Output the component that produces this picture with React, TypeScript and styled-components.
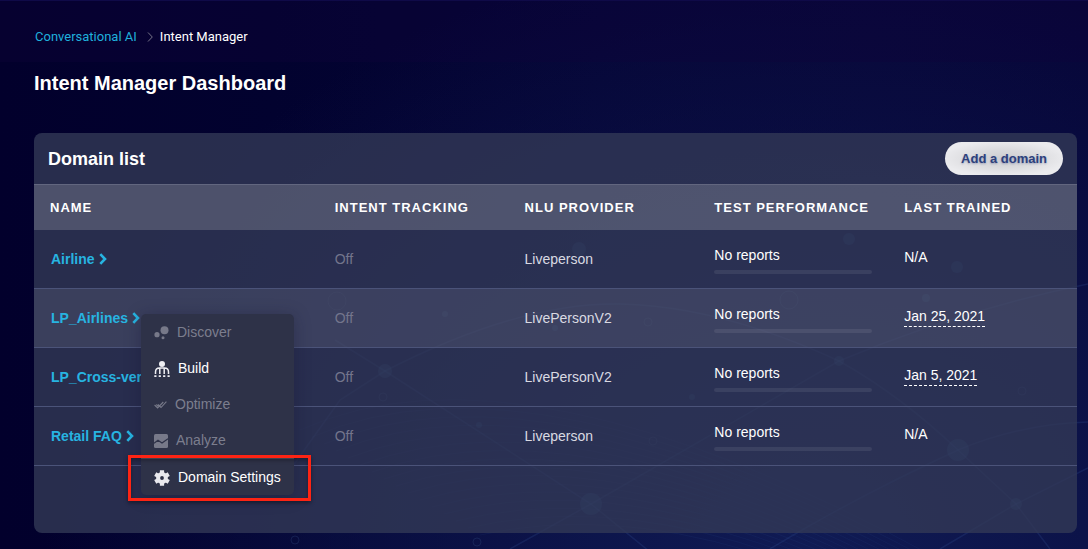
import React from "react";
import styled, { createGlobalStyle } from "styled-components";

const GlobalStyle = createGlobalStyle`
  * { box-sizing: border-box; }
  body {
    margin: 0;
    background: #02002c;
    color: #fff;
    font-family: "Liberation Sans", Arial, sans-serif;
    font-size: 14px;
    line-height: 20px;
  }
`;

const Page = styled.div`
  position: relative;
  isolation: isolate;
  min-height: 100vh;
  padding-bottom: 16px;
  background:
    radial-gradient(ellipse 70% 110% at 74% 100%, #101b54 0%, rgba(13, 22, 76, 0.65) 50%, rgba(2, 0, 44, 0) 100%),
    linear-gradient(90deg, #02002c 0%, #02022f 25%, #050536 55%, #070638 80%, #060538 100%);
`;

const Backdrop = styled.svg`
  position: absolute;
  inset: 0;
  width: 100%;
  height: 100%;
  z-index: -1;
`;

const TopBar = styled.nav`
  display: flex;
  align-items: center;
  height: 62px;
  padding: 10px 35px 0;
  border-top: 1px solid #0f0a48;
  background: rgba(16, 4, 60, 0.3);
  font-family: Roboto, sans-serif;
  font-size: 13px;
`;

const CrumbLink = styled.a`
  color: #1fb0dc;
  text-decoration: none;
`;

const CrumbArrow = styled.svg`
  width: 6px;
  height: 10px;
  margin: 0 7px 0 10px;
`;

const Main = styled.main`
  padding: 11px 11px 0 34px;
`;

const Title = styled.h1`
  margin: 0 0 40px;
  font-size: 20px;
  line-height: 20px;
  font-weight: 700;
`;

const Card = styled.section`
  padding-bottom: 67px;
  border-radius: 8px;
  background: rgba(51, 57, 86, 0.79);
`;

const CardHeader = styled.header`
  display: flex;
  align-items: center;
  justify-content: space-between;
  height: 51px;
  padding: 0 14px;
`;

const CardTitle = styled.h2`
  margin: 0;
  font-size: 18px;
  line-height: 20px;
`;

const AddButton = styled.button`
  height: 33px;
  padding: 0 16px;
  border: 0;
  border-radius: 17px;
  background: radial-gradient(ellipse at center, #cdcdd1 0%, #d9d9dc 35%, #ebebee 75%);
  color: #2d3f7c;
  font: 700 13px/20px "Liberation Sans", Arial, sans-serif;
  text-shadow: 0 1px 2px rgba(45, 63, 124, 0.35);
`;

const Table = styled.table`
  width: 100%;
  table-layout: fixed;
  border-collapse: separate;
  border-spacing: 0;
`;

const HeadCell = styled.th<{ $width: string }>`
  width: ${(p) => p.$width};
  height: 46px;
  padding: 0 0 0 16px;
  border-top: 1px solid #62667f;
  background: rgba(250, 252, 245, 0.18);
  font-size: 13px;
  letter-spacing: 1px;
  text-align: left;
  white-space: nowrap;
`;

const Row = styled.tr<{ $active?: boolean }>`
  background: ${(p) => (p.$active ? "rgba(255, 255, 255, 0.085)" : "transparent")};
`;

const Cell = styled.td<{ $tone?: "muted" | "soft" }>`
  position: relative;
  height: 59px;
  padding: 0 16px;
  border-bottom: 1px solid #4b5379;
  vertical-align: middle;
  white-space: nowrap;
  color: ${(p) => (p.$tone === "muted" ? "#73758c" : p.$tone === "soft" ? "#d9dae2" : "#fff")};

  &:first-child { padding-left: 17px; }
`;

const DomainLink = styled.a`
  display: inline-flex;
  align-items: center;
  gap: 4px;
  color: #27b4e1;
  font-weight: 700;
  text-decoration: none;
`;

const LinkArrow = styled.svg`
  width: 8px;
  height: 12px;
`;

const Reports = styled.div`
  display: grid;
  gap: 5px;
`;

const Track = styled.div`
  height: 4px;
  border-radius: 2px;
  background: rgba(255, 255, 255, 0.08);
`;

const Trained = styled.span<{ $dated: boolean }>`
  display: block;
  width: fit-content;
  margin-bottom: 4px;
  border-bottom: 1px dashed ${(p) => (p.$dated ? "#fff" : "transparent")};
`;

const Menu = styled.div`
  position: absolute;
  z-index: 2;
  top: 25px;
  left: 107px;
  width: 153px;
  border-radius: 5px;
  background: #2e3248;
  box-shadow: 0 2px 16px rgba(20, 20, 50, 0.35);
`;

const MenuItem = styled.button`
  display: flex;
  align-items: center;
  gap: 8px;
  width: 100%;
  height: 36px;
  padding: 0 13px;
  border: 0;
  background: none;
  color: #fff;
  font: 14px/20px "Liberation Sans", Arial, sans-serif;
  white-space: nowrap;

  &:disabled { color: #7c7e8e; }
`;

const MenuFooter = styled.div`
  position: relative;
  border-top: 1px solid #555866;
`;

const Callout = styled.div`
  position: absolute;
  inset: -4px -17px -6px -13px;
  border: 3px solid #fd2414;
  box-shadow: 0 2px 4px rgba(0, 0, 0, 0.4), inset 0 2px 4px rgba(0, 0, 0, 0.35);
  pointer-events: none;
`;

const DiscoverIcon = () => (
  <svg width="15" height="16" viewBox="0 0 15 16" fill="#777989" aria-hidden="true">
    <circle cx="10.5" cy="6.300" r="4" />
    <circle cx="3" cy="10.700" r="2.6" />
    <circle cx="9" cy="13.800" r="1.5" />
  </svg>
);

const BuildIcon = () => (
  <svg width="16" height="18" viewBox="0 0 16 18" fill="none" stroke="#eeeef3" strokeWidth="1.5" aria-hidden="true">
    <circle cx="8" cy="5" r="3" fill="#eeeef3" stroke="none" />
    <path d="M1.5 15v-2c0-2.500 1.500-4 4-4h5c2.500 0 4 1.500 4 4v2M5.800 9v6M10.200 9v6" />
    <path d="M.3 17.100h2.200M4.700 17.100h2.200M9.100 17.100h2.200M13.500 17.100h2.200" strokeWidth="1.600" />
  </svg>
);

const OptimizeIcon = () => (
  <svg width="13" height="10" viewBox="0 0 13 10" fill="none" stroke="#777989" strokeWidth="1.1" aria-hidden="true">
    <path d="M.6 6 3.600 9 9.300 3M4 5.500 7 8.500 12.400 2.600" />
    <path d="M2.400 5.500 4 7.100 5 6.100" />
  </svg>
);

const AnalyzeIcon = () => (
  <svg width="14" height="16" viewBox="0 0 14 16" aria-hidden="true">
    <rect y="2" width="14" height="14" rx="1.500" fill="#777989" />
    <path d="M0 11.300 4 8.300 8 11 14 6.800" fill="none" stroke="#2e3248" strokeWidth="1.200" />
  </svg>
);

const GearIcon = () => (
  <svg width="16" height="18" viewBox="0 0 16 18" fill="none" stroke="#e9e9ee" aria-hidden="true">
    <circle cx="8" cy="10" r="3.900" strokeWidth="4" />
    {[0, 60, 120].map((angle) => (
      <path
        key={angle}
        d="M8 2.200V5.500M8 14.500v3.300"
        strokeWidth="4.200"
        transform={`rotate(${angle} 8 10)`}
      />
    ))}
  </svg>
);

const Network = () => (
  <Backdrop viewBox="0 0 1088 549" preserveAspectRatio="xMidYMid slice" aria-hidden="true">
    <g fill="none" stroke="#35579c" strokeOpacity=".22" strokeWidth="1.500">
      <path d="M335 340 385 371 591 504 660 560" />
      <path d="M385 371Q520 302 620 304T839 361" />
      <path d="M385 371 340 400 290 470" />
      <path d="M510 549 591 504 839 361Q960 310 1088 284" />
      <path d="M839 361Q900 395 958 450L1016 504 1050 549" />
      <path d="M770 549Q850 500 958 450 1020 424 1088 422" />
      <path d="M940 549 1016 504 1088 468" />
    </g>
    <g fill="none" stroke="#35579c" strokeOpacity=".1">
      {Array.from({ length: 16 }, (_, i) => (
        <path key={i} d={`M${300 + i * 12} ${430 + i * 7}Q${520 + i * 14} ${330 + i * 10} ${940 + i * 8} ${560 + i * 10}`} />
      ))}
    </g>
    <g fill="#31659a" fillOpacity=".28">
      <circle cx="849" cy="239" r="6" />
      <circle cx="957" cy="267" r="6" />
      <circle cx="579" cy="249" r="7" />
      <circle cx="385" cy="371" r="7" />
      <circle cx="591" cy="504" r="11" />
      <circle cx="839" cy="361" r="5" />
      <circle cx="958" cy="450" r="11" />
      <circle cx="1016" cy="504" r="6" />
      <circle cx="926" cy="298" r="4" />
      <circle cx="445" cy="314" r="3" />
      <circle cx="555" cy="328" r="3" />
      <circle cx="479" cy="425" r="3" />
      <circle cx="692" cy="397" r="3" />
    </g>
    <g fill="none" stroke="#46629c" strokeOpacity=".22">
      <circle cx="337" cy="301" r="9" />
      <circle cx="789" cy="300" r="9" />
      <circle cx="648" cy="322" r="4" />
      <circle cx="383" cy="397" r="4" />
      <circle cx="653" cy="441" r="4" />
      <circle cx="1022" cy="391" r="4" />
      <circle cx="477" cy="542" r="4" />
      <circle cx="295" cy="540" r="4" />
    </g>
  </Backdrop>
);

const DomainMenu = () => (
  <Menu role="menu" aria-label="LP_Airlines">
    <MenuItem role="menuitem" disabled><DiscoverIcon />Discover</MenuItem>
    <MenuItem role="menuitem"><BuildIcon />Build</MenuItem>
    <MenuItem role="menuitem" disabled><OptimizeIcon />Optimize</MenuItem>
    <MenuItem role="menuitem" disabled><AnalyzeIcon />Analyze</MenuItem>
    <MenuFooter>
      <MenuItem role="menuitem"><GearIcon />Domain Settings</MenuItem>
      <Callout />
    </MenuFooter>
  </Menu>
);

const columns = [
  { label: "NAME", width: "27.3%" },
  { label: "INTENT TRACKING", width: "18.2%" },
  { label: "NLU PROVIDER", width: "18.2%" },
  { label: "TEST PERFORMANCE", width: "18.2%" },
  { label: "LAST TRAINED", width: "18.1%" },
];

const domains = [
  { name: "Airline", provider: "Liveperson", trained: "N/A" },
  { name: "LP_Airlines", provider: "LivePersonV2", trained: "Jan 25, 2021", open: true },
  { name: "LP_Cross-vertical", provider: "LivePersonV2", trained: "Jan 5, 2021" },
  { name: "Retail FAQ", provider: "Liveperson", trained: "N/A" },
];

export default function App() {
  return (
    <Page>
      <GlobalStyle />
      <Network />
      <TopBar aria-label="Breadcrumb">
        <CrumbLink href="#conversational-ai">Conversational AI</CrumbLink>
        <CrumbArrow viewBox="0 0 6 10" fill="none" stroke="#777589" aria-hidden="true">
          <path d="M1 .5 5.300 5 1 9.500" />
        </CrumbArrow>
        <span aria-current="page">Intent Manager</span>
      </TopBar>
      <Main>
        <Title>Intent Manager Dashboard</Title>
        <Card>
          <CardHeader>
            <CardTitle>Domain list</CardTitle>
            <AddButton type="button">Add a domain</AddButton>
          </CardHeader>
          <Table>
            <thead>
              <tr>
                {columns.map((c) => (
                  <HeadCell key={c.label} $width={c.width} scope="col">{c.label}</HeadCell>
                ))}
              </tr>
            </thead>
            <tbody>
              {domains.map((d) => (
                <Row key={d.name} $active={d.open}>
                  <Cell>
                    <DomainLink href={`#${d.name}`}>
                      {d.name}
                      <LinkArrow viewBox="0 0 8 12" fill="none" stroke="currentColor" strokeWidth="2.600" aria-hidden="true">
                        <path d="M1.300 1.200 6 6 1.300 10.800" />
                      </LinkArrow>
                    </DomainLink>
                    {d.open && <DomainMenu />}
                  </Cell>
                  <Cell $tone="muted">Off</Cell>
                  <Cell $tone="soft">{d.provider}</Cell>
                  <Cell>
                    <Reports>
                      No reports
                      <Track />
                    </Reports>
                  </Cell>
                  <Cell>
                    <Trained $dated={d.trained !== "N/A"}>{d.trained}</Trained>
                  </Cell>
                </Row>
              ))}
            </tbody>
          </Table>
        </Card>
      </Main>
    </Page>
  );
}
